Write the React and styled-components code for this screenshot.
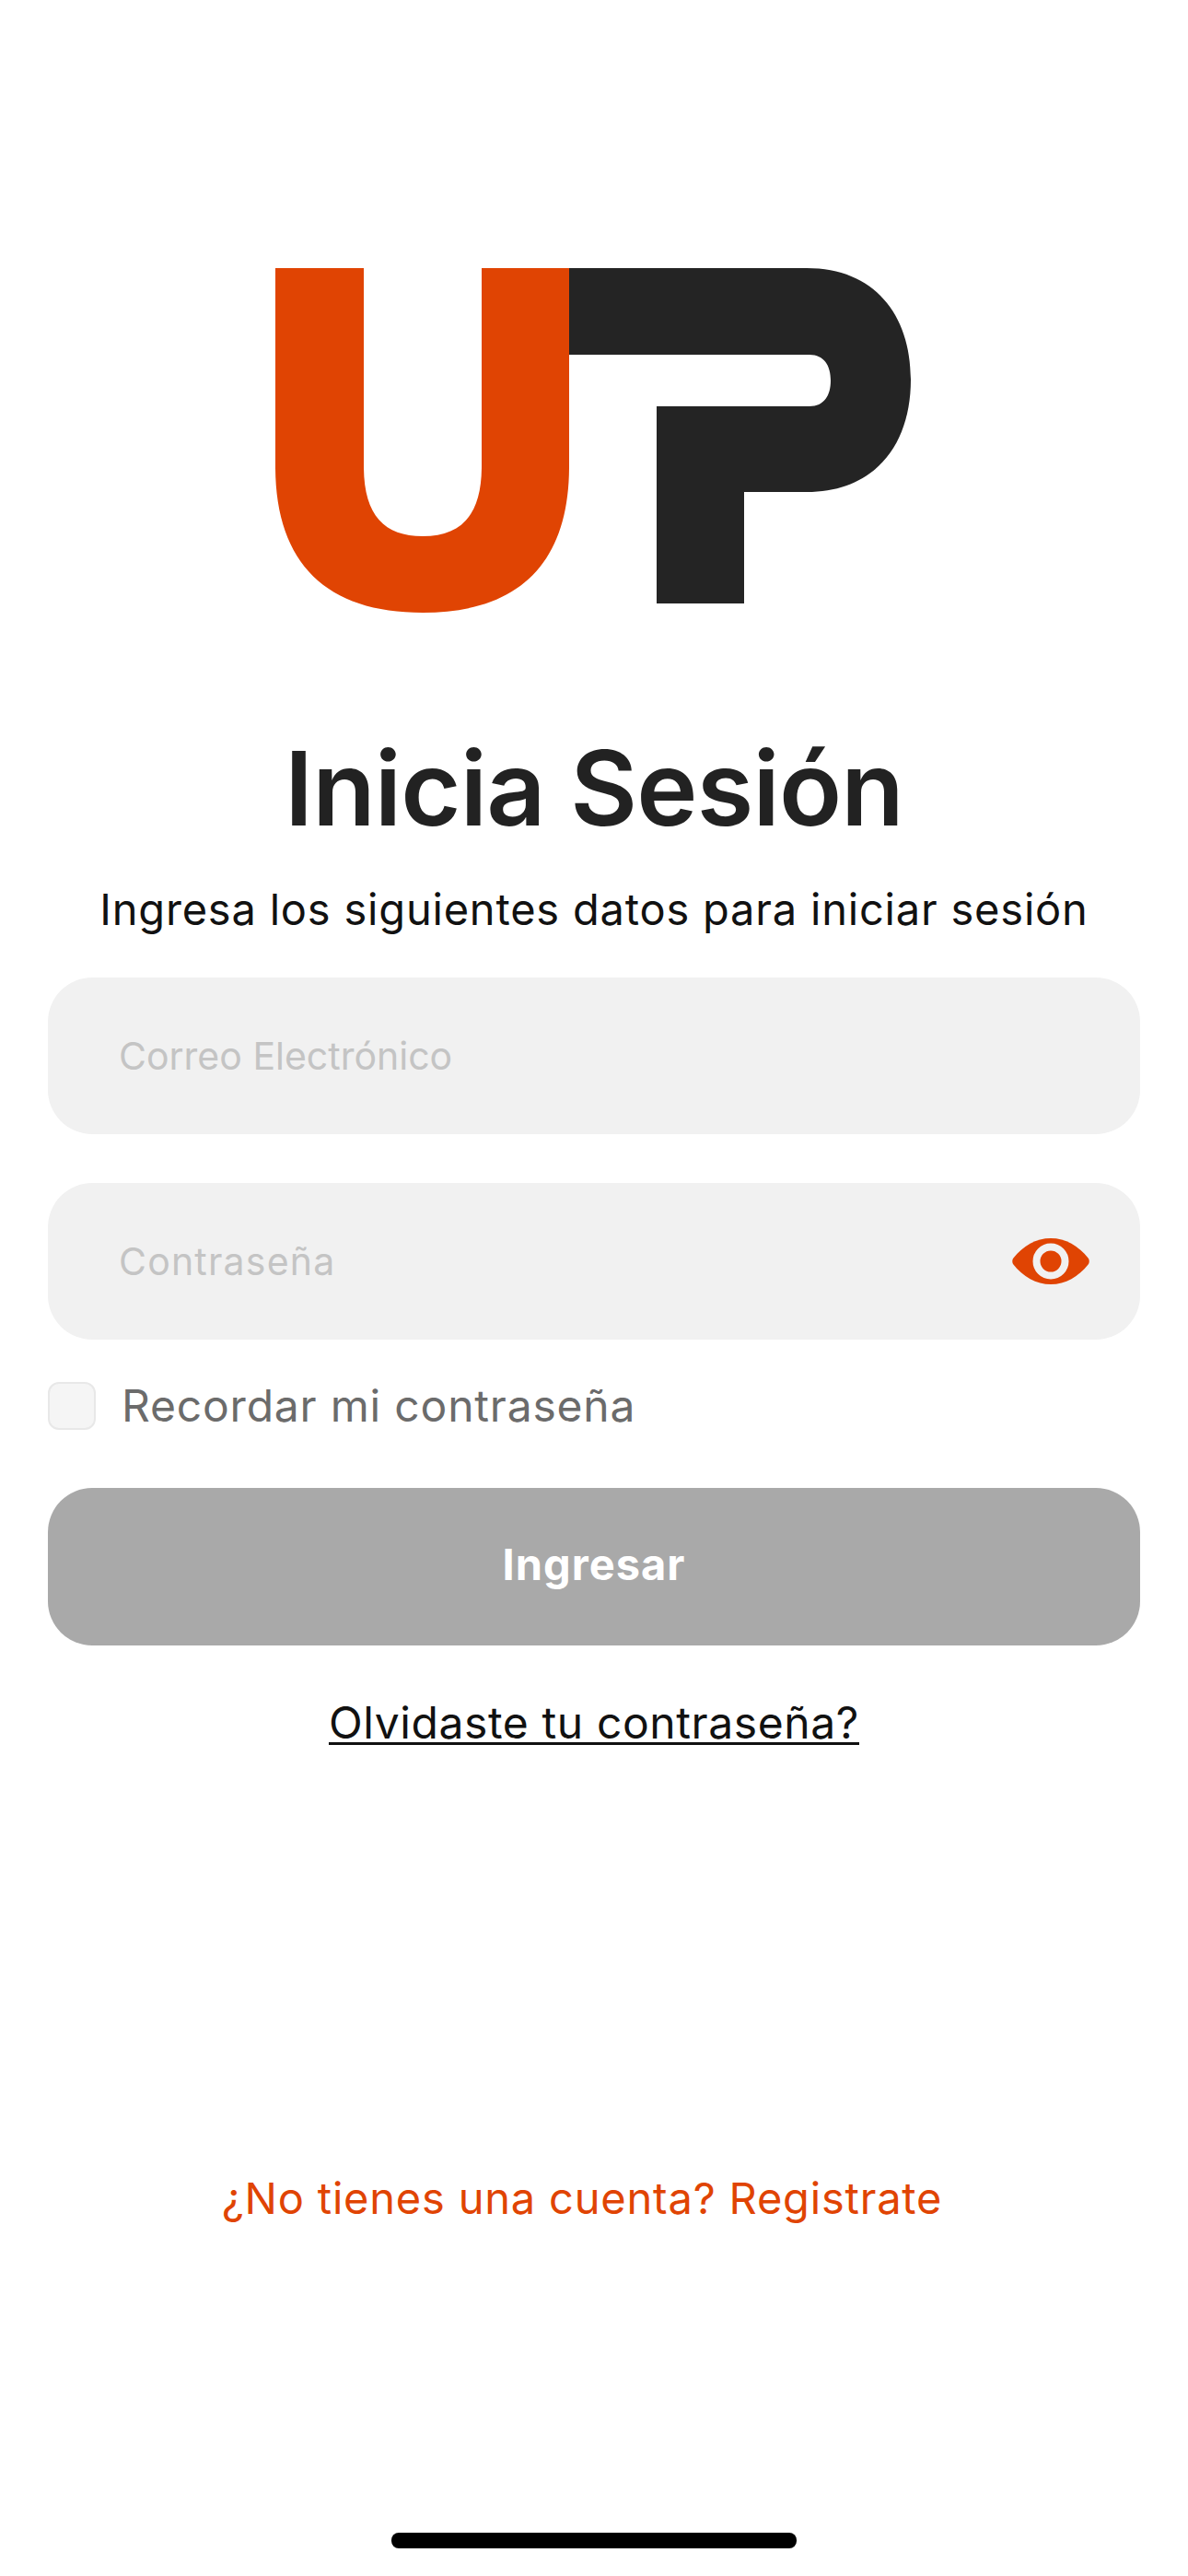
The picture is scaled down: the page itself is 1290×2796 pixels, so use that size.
import React from "react";
import styled, { createGlobalStyle } from "styled-components";

const GlobalStyle = createGlobalStyle`
  html, body {
    margin: 0;
    padding: 0;
    background: #ffffff;
  }
  * {
    box-sizing: border-box;
  }
`;

function Logo() {
  return (
    <LogoSvg viewBox="0 0 690 374">
      <path
        d="M0 0H96V215C96 268 118 291 160 291C202 291 224 268 224 215V0H319V215C319 320 265 374 160 374C55 374 0 320 0 215Z"
        fill="#e04403"
      />
      <path
        d="M319 0H577C650 0 690 50 690 121C690 193 650 243 577 243H509V364H414V150H580C596 150 603 138 603 122C603 106 596 94 580 94H319Z"
        fill="#242424"
      />
    </LogoSvg>
  );
}

function EyeIcon() {
  return (
    <EyeSvg viewBox="0 0 84 50">
      <path
        d="M1 22C12 8 26 0 42 0C58 0 72 8 83 22C84 24 84 26 83 28C72 42 58 50 42 50C26 50 12 42 1 28C0 26 0 24 1 22Z"
        fill="#e04403"
      />
      <circle cx="42" cy="25" r="15.5" fill="none" stroke="#f1f1f1" strokeWidth="8" />
    </EyeSvg>
  );
}

export default function App() {
  return (
    <>
      <GlobalStyle />
      <Page>
        <Logo />
        <Title>Inicia Sesión</Title>
        <Subtitle>Ingresa los siguientes datos para iniciar sesión</Subtitle>
        <Form>
          <Field>
            <FieldInput placeholder="Correo Electrónico" />
          </Field>
          <Field>
            <FieldInput $spacing="1.2px" placeholder="Contraseña" />
            <EyeIcon />
          </Field>
          <RememberRow>
            <CheckBox />
            <RememberText>Recordar mi contraseña</RememberText>
          </RememberRow>
          <SubmitButton>Ingresar</SubmitButton>
        </Form>
        <ForgotLink>Olvidaste tu contraseña?</ForgotLink>
        <RegisterLink>¿No tienes una cuenta? Registrate</RegisterLink>
        <HomeBar />
      </Page>
    </>
  );
}

const Page = styled.div`
  width: 1290px;
  height: 2796px;
  padding: 291px 52px 0;
  display: flex;
  flex-direction: column;
  align-items: center;
  font-family: Inter, "Liberation Sans", sans-serif;
  overflow: hidden;
`;

const LogoSvg = styled.svg`
  width: 690px;
  height: 374px;
  margin-right: 3px;
  flex: none;
`;

const Title = styled.h1`
  margin: 125px 0 0;
  font-size: 112px;
  line-height: 130px;
  font-weight: 600;
  letter-spacing: -0.8px;
  color: #222222;
`;

const Subtitle = styled.p`
  margin: 36px 0 0;
  font-size: 47px;
  line-height: 62px;
  font-weight: 400;
  letter-spacing: 0.8px;
  color: #111111;
`;

const Form = styled.div`
  margin-top: 43px;
  width: 100%;
  display: flex;
  flex-direction: column;
`;

const Field = styled.div`
  height: 170px;
  margin-bottom: 53px;
  padding: 0 55px 0 77px;
  display: flex;
  align-items: center;
  background: #f1f1f1;
  border-radius: 48px;
`;

const FieldInput = styled.input`
  flex: 1;
  min-width: 0;
  padding: 0;
  border: none;
  outline: none;
  background: transparent;
  font-family: inherit;
  font-size: 41px;
  letter-spacing: ${(props) => props.$spacing || "0"};
  color: #222222;

  &::placeholder {
    color: #c4c4c4;
    opacity: 1;
  }
`;

const EyeSvg = styled.svg`
  width: 84px;
  height: 50px;
  flex: none;
`;

const RememberRow = styled.div`
  margin-top: -12px;
  display: flex;
  align-items: center;
  gap: 28px;
`;

const CheckBox = styled.div`
  width: 52px;
  height: 52px;
  background: #f5f5f5;
  border: 2px solid #e8e8e8;
  border-radius: 12px;
`;

const RememberText = styled.span`
  font-size: 48px;
  line-height: 62px;
  letter-spacing: 0.8px;
  color: #6b6b6b;
`;

const SubmitButton = styled.button`
  margin-top: 58px;
  height: 171px;
  padding: 0 0 6px;
  border: none;
  border-radius: 48px;
  background: #a9a9a9;
  color: #ffffff;
  font-family: inherit;
  font-size: 47px;
  font-weight: 700;
  letter-spacing: 1px;
`;

const ForgotLink = styled.a`
  margin-top: 53px;
  font-size: 48px;
  line-height: 62px;
  letter-spacing: 0.6px;
  color: #111111;
  text-decoration: underline;
  text-underline-offset: 4px;
  text-decoration-thickness: 3px;
`;

const RegisterLink = styled.a`
  margin-top: 454px;
  margin-right: 26px;
  font-size: 47px;
  line-height: 62px;
  letter-spacing: 0.8px;
  color: #e04403;
`;

const HomeBar = styled.div`
  margin-top: 332px;
  width: 440px;
  height: 17px;
  border-radius: 8px;
  background: #000000;
`;
